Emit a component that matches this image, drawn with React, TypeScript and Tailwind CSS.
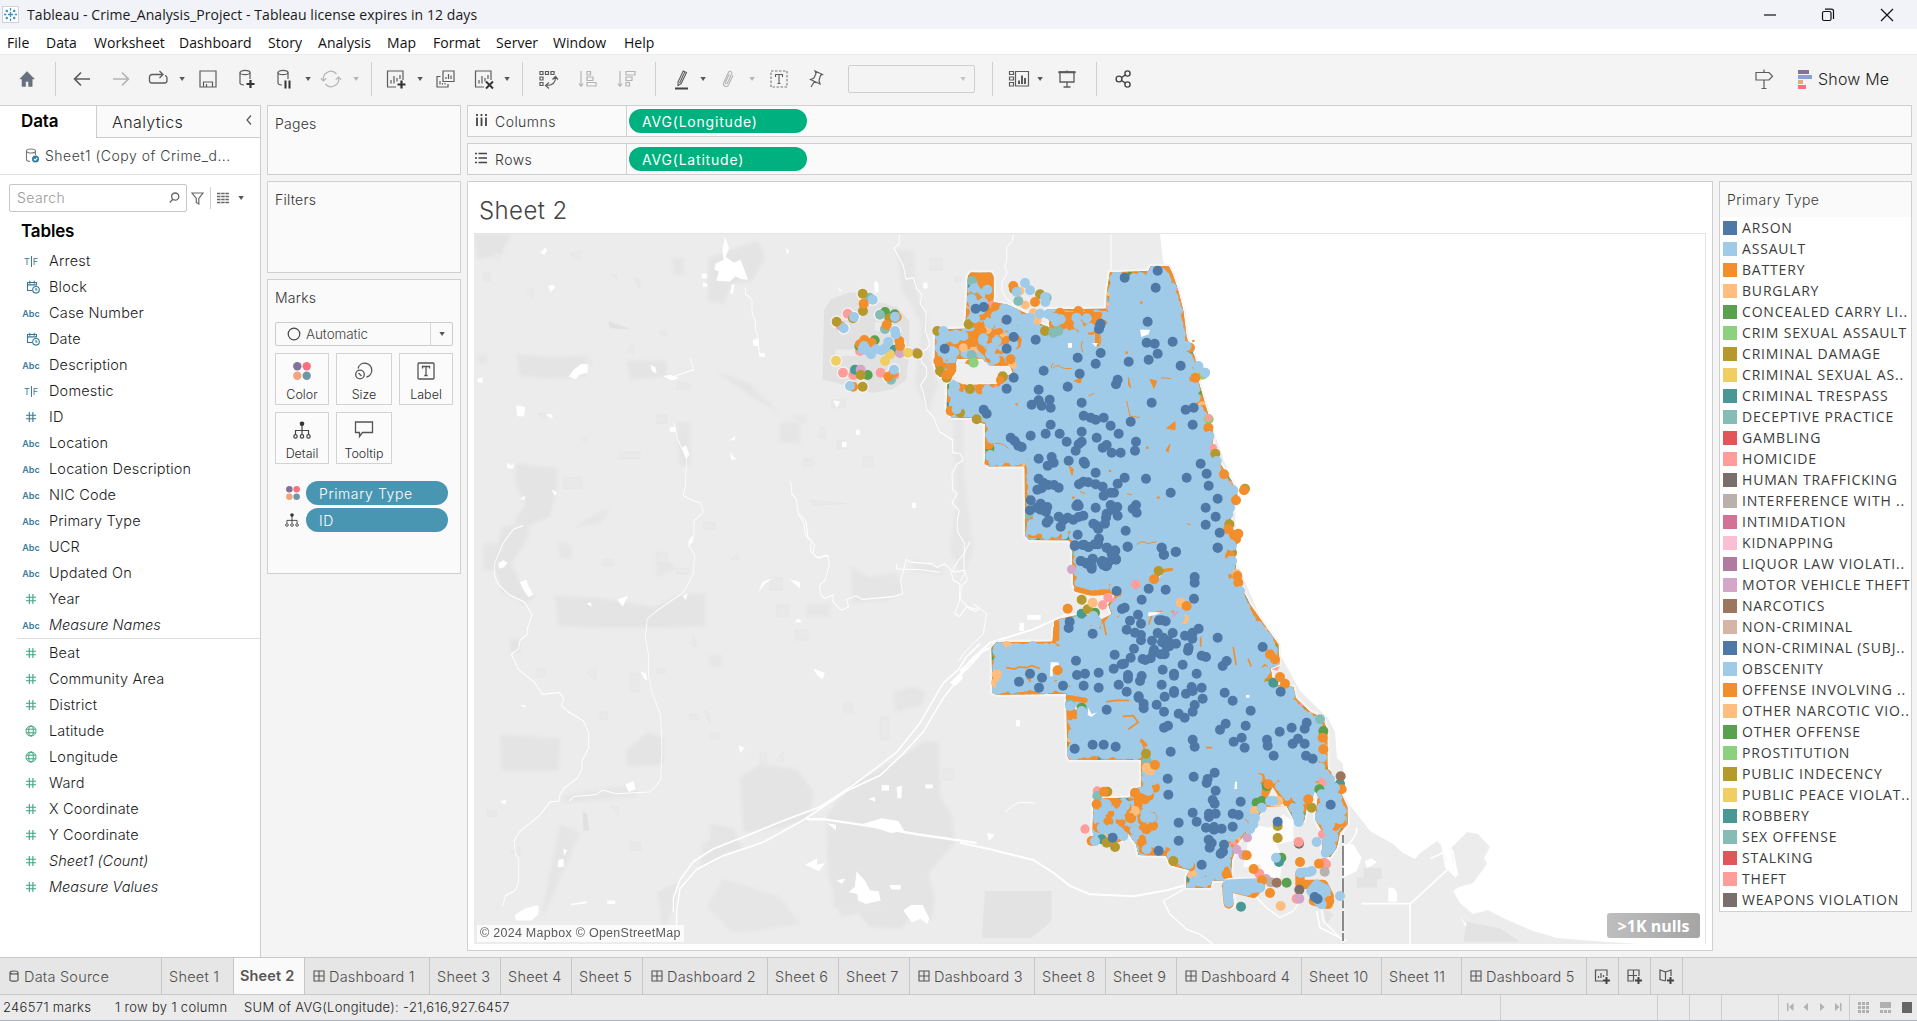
import React from "react";

const UI = "font-['Inter','Open_Sans',sans-serif]";
const SEG = "font-['Open_Sans','Noto_Sans',sans-serif]";

const C = {
  navy: "#4e79a7", sky: "#a0cbe8", orange: "#f28e2b", peach: "#ffbe7d", green: "#59a14f", lime: "#8cd17d",
  olive: "#b6992d", yellow: "#f1ce63", teal: "#499894", mint: "#86bcb6", red: "#e15759", pink: "#ff9d9a",
  gray: "#79706e", silver: "#bab0ac", rose: "#d37295", blush: "#fabfd2", purple: "#b07aa1", lilac: "#d4a6c8",
  brown: "#9d7660", tan: "#d7b5a6",
};

const legend: [string, string][] = [
  ["ARSON", C.navy], ["ASSAULT", C.sky], ["BATTERY", C.orange], ["BURGLARY", C.peach],
  ["CONCEALED CARRY LI..", C.green], ["CRIM SEXUAL ASSAULT", C.lime], ["CRIMINAL DAMAGE", C.olive],
  ["CRIMINAL SEXUAL AS..", C.yellow], ["CRIMINAL TRESPASS", C.teal], ["DECEPTIVE PRACTICE", C.mint],
  ["GAMBLING", C.red], ["HOMICIDE", C.pink], ["HUMAN TRAFFICKING", C.gray], ["INTERFERENCE WITH ..", C.silver],
  ["INTIMIDATION", C.rose], ["KIDNAPPING", C.blush], ["LIQUOR LAW VIOLATI..", C.purple],
  ["MOTOR VEHICLE THEFT", C.lilac], ["NARCOTICS", C.brown], ["NON-CRIMINAL", C.tan],
  ["NON-CRIMINAL (SUBJ..", C.navy], ["OBSCENITY", C.sky], ["OFFENSE INVOLVING ..", C.orange],
  ["OTHER NARCOTIC VIO..", C.peach], ["OTHER OFFENSE", C.green], ["PROSTITUTION", C.lime],
  ["PUBLIC INDECENCY", C.olive], ["PUBLIC PEACE VIOLAT..", C.yellow], ["ROBBERY", C.teal],
  ["SEX OFFENSE", C.mint], ["STALKING", C.red], ["THEFT", C.pink], ["WEAPONS VIOLATION", C.gray],
];

type Kind = "tf" | "date" | "abc" | "num" | "geo";
const dimensions: [Kind, string][] = [
  ["tf", "Arrest"], ["date", "Block"], ["abc", "Case Number"], ["date", "Date"], ["abc", "Description"],
  ["tf", "Domestic"], ["num", "ID"], ["abc", "Location"], ["abc", "Location Description"], ["abc", "NIC Code"],
  ["abc", "Primary Type"], ["abc", "UCR"], ["abc", "Updated On"],
];
const measures: [Kind, string][] = [
  ["num", "Beat"], ["num", "Community Area"], ["num", "District"], ["geo", "Latitude"], ["geo", "Longitude"],
  ["num", "Ward"], ["num", "X Coordinate"], ["num", "Y Coordinate"],
];

function Svg({ size = 22, children, color = "#5c5c5c", sw = 1.2, className = "" }: { size?: number; children: React.ReactNode; color?: string; sw?: number; className?: string }) {
  return (
    <svg width={size} height={size} viewBox={`0 0 ${size} ${size}`} fill="none" stroke={color} strokeWidth={sw} className={`block shrink-0 ${className}`}>
      {children}
    </svg>
  );
}

function Caret({ className = "", color = "#555" }: { className?: string; color?: string }) {
  return (
    <svg width="8" height="6" viewBox="0 0 8 6" className={`block shrink-0 ${className}`}>
      <path d="M1.4 1h5.4L4.1 5z" fill={color} />
    </svg>
  );
}

const Sep = ({ className = "" }: { className?: string }) => <div className={`h-[34px] w-px shrink-0 bg-[#cfcfcf] ${className}`} />;

function FieldIcon({ kind, green }: { kind: Kind; green?: boolean }) {
  const col = green ? "#3ba57c" : "#34789a";
  if (kind === "abc") return <span className="font-['Inter'] text-[9px] font-semibold leading-none text-[#3a7c9c]">Abc</span>;
  if (kind === "tf")
    return (
      <span className="flex items-center gap-[1px] font-['Inter'] text-[9px] leading-none text-[#3a7c9c]">
        T<span className="h-[11px] w-px bg-[#3a7c9c]" />F
      </span>
    );
  if (kind === "num")
    return (
      <Svg size={12} color={col} sw={1.1}>
        <path d="M4.3 1v10M7.9 1v10M1 4.3h10M1 7.8h10" />
      </Svg>
    );
  if (kind === "geo")
    return (
      <Svg size={12} color={col} sw={1}>
        <circle cx="6" cy="6" r="5" />
        <ellipse cx="6" cy="6" rx="2.3" ry="5" />
        <path d="M1.4 4.2h9.2M1.4 7.8h9.2" />
      </Svg>
    );
  return (
    <Svg size={14} color={col} sw={1.1} className="ml-1">
      <path d="M6 10.5H1.5v-8h9v3M1.5 4.9h9M3.8.8v3M8.2.8v3" />
      <circle cx="10" cy="9.8" r="3.3" />
      <path d="M10 8v2h1.5" />
    </Svg>
  );
}

function Field({ kind, name, green, italic }: { kind: Kind; name: string; green?: boolean; italic?: boolean }) {
  return (
    <div className="flex h-[26px] items-center">
      <div className="flex w-[62px] shrink-0 justify-center"><FieldIcon kind={kind} green={green} /></div>
      <div className={`-ml-[13px] whitespace-nowrap text-[14.5px] font-[350] text-[#1c1c1c] ${italic ? "italic tracking-[0.03px]" : "tracking-[0.18px]"}`}>{name}</div>
    </div>
  );
}

function ColorDots({ size }: { size: number }) {
  return (
    <svg width={size} height={size} viewBox="0 0 18 18" className="block">
      <circle cx="4.3" cy="4.3" r="4.2" fill="#84719a" />
      <circle cx="13.7" cy="4.3" r="4.2" fill="#fb6f80" />
      <circle cx="4.3" cy="13.7" r="4.2" fill="#f2a57c" />
      <circle cx="13.7" cy="13.7" r="4.2" fill="#6d97a6" />
    </svg>
  );
}

function DetailIcon({ size }: { size: number }) {
  return (
    <svg width={size} height={size} viewBox="0 0 18 18" fill="none" stroke="#444" strokeWidth="1.2" className="block">
      <circle cx="9" cy="2.7" r="2.3" fill="#333" stroke="none" />
      <path d="M9 4v9M2.5 13V9.5h13V13" />
      <circle cx="2.5" cy="15.4" r="1.7" />
      <circle cx="9" cy="15.4" r="1.7" />
      <circle cx="15.5" cy="15.4" r="1.7" />
    </svg>
  );
}

function MarkButton({ label, children, className = "" }: { label: string; children: React.ReactNode; className?: string }) {
  return (
    <div className={`flex h-[52px] flex-col items-center border border-[#d3d3d3] bg-[#fbfbfb] pt-[7px] ${className}`}>
      <div className="flex h-[20px] items-center">{children}</div>
      <div className="mt-[6px] text-[12.5px] font-[350] leading-4 text-[#2c2c2c]">{label}</div>
    </div>
  );
}

const Grid4 = ({ color = "#555" }: { color?: string }) => (
  <Svg size={12} color={color} sw={1.1}><path d="M1 1h10v10H1zM6 1v10M1 6h10" /></Svg>
);

/* ---------- map ---------- */

type Pt = [number, number];

function Dots({ at, color, r = 15 }: { at: string; color: string; r?: number }) {
  return (
    <g fill={color}>
      {at.trim().split(/\s+/).map((p, i) => {
        const [x, y] = p.split(",").map(Number);
        return <circle key={i} cx={x} cy={y} r={r} />;
      })}
    </g>
  );
}

/* Each map tile has its own local grid, three units to a pixel. */
const NORTH = "translate(800 230) scale(.33333)";
const SOUTH = "translate(960 540) scale(.33333)";
const WEST = "translate(470 230) scale(.33333 .456)";
const SHORE = "translate(1200 730) scale(.33333)";

const CITY =
  "M512,125 L574,125 L580,138 L580,213 L625,222 L680,248 L712,275 L750,290 L742,235 L918,233 L921,180 L930,124 L1045,121 L1052,106 L1106,105 L1118,130 L1135,180 L1150,240 L1160,320 L1185,380 L1198,460 L1226,555 L1240,610 L1238,655 L1265,705 L1295,750 L1312,790 L1300,830 L1290,870 L1300,920 L1305,960 L1304,990 L1315,1050 L1350,1120 L1385,1170 L1435,1240 L1438,1300 L1412,1312 L1420,1360 L1480,1368 L1488,1402 L1530,1442 L1568,1460 L1582,1500 L1582,1600 L1588,1640 L1610,1660 L1625,1690 L1643,1730 L1643,1780 L1620,1805 L1610,1850 L1590,1878 L1568,1865 L1566,1800 L1545,1765 L1552,1710 L1560,1670 L1548,1690 L1520,1730 L1512,1770 L1488,1778 L1460,1725 L1420,1668 L1388,1640 L1394,1690 L1382,1745 L1350,1790 L1312,1838 L1295,1890 L1292,1947 L1235,1950 L1232,1971 L1158,1970 L1160,1935 L1168,1918 L1112,1903 L1098,1874 L1016,1872 L1008,1840 L984,1806 L960,1832 L930,1838 L880,1825 L878,1795 L880,1710 L912,1702 L990,1700 L995,1675 L1024,1668 L1024,1585 L1012,1586 L808,1586 L802,1575 L799,1388 L590,1391 L577,1385 L575,1250 L590,1234 L758,1232 L760,1190 L775,1165 L850,1148 L900,1168 L935,1150 L925,1120 L945,1095 L930,1086 L830,1082 L820,1060 L815,940 L806,928 L688,927 L676,915 L674,706 L566,706 L556,696 L555,578 L525,572 L515,560 L455,560 L440,535 L442,460 L470,450 L500,462 L590,460 L605,438 L640,430 L630,404 L560,402 L548,382 L470,384 L462,432 L418,438 L404,400 L405,312 L420,295 L495,293 L500,225 L504,135 Z";

/* Small deterministic generator, so the fringe is the same on every render. */
function rng(seed: number) {
  let s = seed;
  return () => {
    s = (s * 16807) % 2147483647;
    return s / 2147483647;
  };
}

const cityPts: Pt[] = CITY.replace(/[MLZ]/g, " ").trim().split(/\s+/).map((p) => p.split(",").map(Number) as Pt);

function buildFringe() {
  const rand = rng(4711);
  const under: { x: number; y: number; c: string }[] = [];
  const over: { x: number; y: number }[] = [];
  const others = [C.olive, C.mint, C.olive, C.pink, C.peach, C.green, C.teal];
  cityPts.forEach(([x1, y1], i) => {
    const [x2, y2] = cityPts[(i + 1) % cityPts.length];
    const len = Math.hypot(x2 - x1, y2 - y1);
    const ux = (x2 - x1) / len, uy = (y2 - y1) / len;
    for (let d = 0; d < len; d += 11) {
      const k = 8 + rand() * 5;
      under.push({ x: x1 + ux * d - uy * k, y: y1 + uy * d + ux * k, c: rand() < 0.74 ? C.orange : others[Math.floor(rand() * others.length)] });
      if (rand() < 0.72) {
        const m = 14 + rand() * 11;
        const e = d + rand() * 8;
        over.push({ x: x1 + ux * e - uy * m, y: y1 + uy * e + ux * m });
      }
    }
  });
  return { under, over };
}
const fringe = buildFringe();

function scatter(seed: number, n: number, x0: number, y0: number, x1: number, y1: number) {
  const rand = rng(seed);
  return Array.from({ length: n }, () => `${Math.round(x0 + rand() * (x1 - x0))},${Math.round(y0 + rand() * (y1 - y0))}`).join(" ");
}

const ARSON_N =
  "1073,119 974,140 1067,170 527,233 551,228 620,266 434,353 641,318 707,326 620,353 902,278 900,284 897,294 1043,272 1040,335 1064,338 1118,332 1073,368 1046,386 986,392 902,366 887,398 833,380 731,419 839,428 641,440 1142,404 953,446 948,460 620,473 803,467 716,476 845,515 1055,515 695,521 716,508 725,524 749,506 752,530 551,536 560,548 851,554 872,560 887,566 911,560 992,572 932,584 1181,530 1157,536 1178,581 752,581 737,608 779,608 692,614 845,602 890,620 956,608 800,632 632,620 644,630 655,644 665,648 845,632 836,640 827,659 908,650 920,642 1008,632 1005,659 935,665 962,665 716,683 755,678 761,695 743,704 806,689 851,692 855,698 887,725 974,740 1038,743 1160,740 1202,698 1220,728 1226,764 716,743 730,755 712,776 725,772 745,762 762,762 776,770 837,760 850,752 865,754 887,760 908,767 953,758 942,785 911,794 932,785 1112,785 1253,803 1217,830 1247,857 1217,881 1259,905 1253,950 692,808 690,838 710,830 722,818 722,836 742,828 738,842 833,820 829,825 836,825 887,830 932,822 935,836 952,828 1008,822 998,833 1010,845 953,854 776,857 803,860 790,868 820,866 836,858 850,854 746,868 740,875 782,887 880,878 890,884 915,878 918,860 920,848 895,894 977,899 833,911 897,923 825,943 852,941 865,948 884,940 895,940 920,950 983,947 1085,950 1091,971 1127,963 945,958 935,968 948,986 878,983 843,990 860,996 875,1006 905,994 925,994 918,1006";
const ARSON_S =
  "344,15 368,12 386,18 413,10 441,20 466,30 503,17 468,54 440,65 427,60 430,72 441,74 398,54 362,60 380,68 395,83 605,20 612,41 648,32 773,20 704,108 704,125 566,143 617,146 470,150 545,176 702,173 486,204 494,200 534,221 510,239 543,248 329,242 326,261 597,238 606,238 617,241 398,278 500,266 525,275 543,282 543,298 593,276 638,276 610,290 625,300 576,299 606,304 648,308 675,284 698,275 716,263 697,293 620,318 628,316 582,326 580,335 602,340 614,340 773,290 908,318 522,323 686,320 684,329 464,341 512,350 548,354 556,357 572,352 725,344 738,348 492,368 485,370 461,383 800,360 788,375 668,371 608,386 348,359 710,398 642,398 642,404 351,402 375,398 416,395 210,398 177,422 246,410 237,440 309,434 371,434 416,440 504,402 504,413 545,405 540,420 476,431 605,431 500,452 695,438 725,440 678,458 698,450 642,450 642,456 614,467 728,473 794,455 818,479 536,466 536,470 551,488 551,502 590,491 704,492 698,512 612,512 656,518 674,530 440,506 872,509 962,452 797,548 780,566 857,554 624,554 612,560 1040,545 995,560 1034,563 959,572 845,590 821,602 854,620 698,596 704,617 632,632 921,596 923,614 1014,593 1034,608 998,608 941,644 1038,644 1058,653 431,611 398,611 467,617 344,623 764,695 701,707 743,714 740,726 623,713 625,761 767,749 842,782 758,777 764,788 698,815 767,818 747,818 747,828 818,818 836,822 656,845 710,842 818,857 738,860 762,858 762,866 785,863 656,899 746,896 755,906 749,920 792,911 789,932 782,938 458,890 596,929 725,971 1112,791 953,842 1064,1068 1073,1074";

const SPECKS = [
  "760,410 q15,-12 25,0 q12,5 30,2", "985,440 l7,30 l-6,-8z", "1050,445 l20,5 l-8,22z", "980,510 l10,45 l30,5", "1100,592 l25,-20 l0,24z",
  "585,638 q20,-5 40,14", "808,705 l8,28 l4,-18z", "845,440 l-22,10 l18,6z", "1110,640 l-6,24 l-6,-6z", "865,495 l18,-8", "840,782 l16,6", "1160,878 l12,3",
  "1010,940 q18,-14 32,-2 l28,-6", "980,788 l16,4", "1083,440 l30,3", "847,330 q-8,20 2,34", "900,310 q5,20 0,30", "760,396 q-10,10 -5,16",
];

function ScatterMap() {
  return (
    <svg width="1231" height="710" viewBox="474 233 1231 710" className="block">
      <defs>
        <clipPath id="city"><path d={CITY} /></clipPath>
        <filter id="soft" x="-5%" y="-5%" width="110%" height="110%"><feGaussianBlur stdDeviation="4" /></filter>
      </defs>
      <rect x="474" y="233" width="1231" height="710" fill="#ececec" />
      {/* parks, preserves and built-up patches */}
      <g transform={WEST} fill="#e3e3e3" filter="url(#soft)">
        <path d="M12,8h110l-30,45l-70,8zM140,270l120,8l90,-5v45l-110,5l-90,-5zM470,285h120v35l-110,5zM715,60l150,-40l20,40l-40,50l-60,5l-25,45l-45,-5z" opacity=".9" />
        <path d="M620,420h40v95h-30zM605,60h36v35h-30zM1280,40l50,5l10,90l35,60l-5,60l35,80l-30,60l-40,-60l20,-130l-60,-80zM740,310l90,20l100,70l-90,-40zM960,405h45v20zM930,420h60v45h-60z" opacity=".8" />
        <path d="M140,510l120,10v45l-20,60l-60,20l-50,-5l35,-40l-30,-50zM95,650l80,-10v30l-50,60l30,50l40,20l-30,20l-70,-30l-25,-60zM255,800l130,5l170,20l80,-30h70v70l-120,5h-220l-100,-5zM90,1105l180,8l-5,70h-170zM470,1140l60,-40l50,10v60l-110,5zM120,895h30v30h-28z" opacity=".9" />
        <path d="M810,1200l60,-30l110,10l50,50l-10,60l-100,20l-100,10zM720,1300l70,10l30,50l-100,10zM1070,1280l80,-70l130,-50l80,-40h45l5,120l35,40l10,60l-80,70l20,50l-10,50l-60,-10l-30,30l-100,-5l-30,-30l-50,10l-40,-90z" opacity=".9" />
        <path d="M1090,1410h160v75h-160zM1270,1010l60,-10l35,10l-10,30l-80,15zM1140,735l60,25l80,-10l20,40l-50,20l-100,5zM40,685h50v60h-50zM700,1340l60,-10v40l-70,30zM560,1450l60,-20l-10,60l-30,40zM270,1300l60,20l-90,150l-30,40z" opacity=".8" />
        <path d="M270,1240l150,-20l80,-5v25l-210,15zM265,680l40,10v30l-40,-5zM310,650l80,-35l30,-5l-30,30zM1330,720l90,20v15l-90,-8zM1010,820l70,-5v30h-70zM760,1420l170,40l60,60l-200,20l-80,-60zM1440,300h40v220l30,180l-30,60l-40,-60l20,-120zM560,700l60,40l-60,20zM20,270l30,0v20h-30zM715,930l40,0v25h-40z" opacity=".6" />
      </g>
      <g transform={WEST} fill="#e1e1e1">
        <path d="M1058,325l4,-150l20,-25l55,-15l25,0l60,20l60,12l36,30v70l-10,60l-40,20l-60,8z" />
        <path d="M1096,260h70v14h-70zM1215,200h40v20h-40z" fill="#ebebeb" />
        <path d="M415,198l70,18l-65,-3zM338,1275l12,0l8,40h-18z" />
      </g>
      {/* small faint lots */}
      <g transform={WEST} fill="#e9e9e9" stroke="#e4e4e4" strokeWidth="1.5">
        <path d="M70,45l25,5l-10,20zM300,50l30,-5v20zM490,100l22,6l-5,20zM170,135l18,-10v25zM420,95h20v12zM570,220h18v10h-18zM470,260l20,-12v22zM350,280l15,4v14zM560,405l30,-3v20h-30zM200,400h25v12zM330,455l20,-5v16zM450,485h60v14h-60zM280,540h55v25h-55zM700,640h35v14h-35zM400,720h28v14h-28zM560,705h30v22h-30zM620,740h36v12h-36zM780,720l25,-12v14zM920,820h36v26h-36zM975,875h38v22h-38zM660,905l12,-20l8,26zM1000,500h28v16h-28zM1100,460h30v18h-30zM1180,495h28v22h-28zM1020,590l110,8l-100,3zM900,760h36v28h-36zM480,970h26v40h-26zM350,970l28,-14v30zM200,960h24v16h-24zM390,1055h22v16h-22zM560,960h24v10h-24zM700,1050l20,10v20zM870,1145h20v25h-20zM720,1100h28v14h-28zM920,1160l20,-20v24zM1230,1065h26v50h-26zM1120,1035h28v20h-28zM660,1060h26v12h-26zM50,1270h30v14h-30zM120,1360l30,-10v20zM480,1340h32v18h-32zM420,1260l26,4v20zM1380,60h36v26h-36zM1420,1180h30v24h-30zM1455,100h18v12h-18zM1050,430h16v24h-16zM620,330l40,6v12h-40zM40,90h20v20h-20zM1085,370h40v18h-40z" />
      </g>
      {/* ponds */}
      <g transform={WEST} fill="#fff">
        <path d="M765,12l12,25l-10,20l25,12l20,-6l10,20l12,24l-22,-2l-15,-6l-18,12l-40,-2l8,-20l-14,-4l4,-14l24,-8l-4,-20zM225,36l6,6l-8,10l-12,-4zM945,38l12,4l-4,10zM235,120l14,-2l8,6l-16,10zM310,305l25,-14l18,2v18l-24,4l-12,10l-20,-6zM542,294l14,4l4,14l-14,-4zM578,318l24,-2l26,6l-22,6zM138,382l28,4l-4,20h-20zM225,402h22v10zM600,430h16v10h-16zM110,508l16,6l8,-8l-6,16l-16,-2zM648,470l10,20l-10,10l-12,-24zM777,460l18,-10v8zM780,486l18,14l-14,2zM150,588l14,-8v10zM244,566l18,8l-8,6zM655,680l14,-12v14l-12,8zM1326,596h12v10h-12zM1158,436h12v10h-12zM1116,462h14v12h-14z" />
        <path d="M150,770l20,-5l4,12l16,20l-14,6l-16,-16zM442,808l32,-8l-16,24zM865,792l12,-22l34,-10l-28,14zM960,764l30,6v14l-16,-10zM350,818l12,-4l4,10zM985,850l12,8h-24zM1030,960l34,8l-6,16l-16,-10zM512,966l16,4l4,16l-10,-4zM150,1040h16v6zM806,1128l18,6l-14,10zM466,1214l24,-8l8,18l-22,6zM90,1250l20,-2l-6,10zM1180,1300l55,-12l50,6l18,22l-40,4zM1235,1215h22v12h-22zM1280,1220l16,-4l-2,28h-12zM1195,1245l20,-4v10zM1366,1214h22v8h-22zM1070,1298l28,4v12zM1005,1390l36,-14v14l24,-4l-18,18zM1100,1424l26,-4l-10,12zM1160,1404l26,22l14,20l26,2l6,20l-44,8l-24,-8l-2,-14l-26,-4l18,-12zM1258,1434h34v10h-28zM1300,1490l24,-12h34l20,30l-6,12l-20,-12l-26,8zM265,1380l16,-4v18l-18,2zM280,1354l12,4l-10,12zM300,1476l50,-6v4l-42,4zM412,1468h24v8h-24zM135,1500l30,-14l40,-8v20l-20,14h-48z" />
        <path d="M848,240l14,-6l8,34h14v8h-16l-4,-24h-14zM1440,990l30,-20l10,10l-24,18zM20,325l18,-4v12h-12zM1212,112l10,-2l2,20l-10,2zM1102,122l14,10h-8zM1362,116h10v10h-10zM85,728l16,-6l12,6l-12,10l-14,2zM638,800l14,-6l-4,16zM695,94h16v10h-16zM700,112l12,4v6h-14zM785,118l8,0l-4,20l-8,-2z" />
      </g>
      {/* rivers and highways */}
      <g transform={WEST} fill="none" stroke="#fff" strokeWidth="2.6" strokeLinejoin="round">
        <path d="M1288,8v20l-16,10l28,38l8,30l22,-4l10,24l16,14l-6,18l18,20v24l-2,16l14,30l-8,10l-18,8v22l16,12v18l-18,20l10,20l8,34l20,16l18,32l40,18v28l22,2l10,14l-20,10l-14,20l2,36l14,8l-16,20l22,18l-6,18v26l22,28l-2,22l-18,16l-20,26l6,16l20,8l-2,38l-14,26l14,8l22,-22l30,5" />
        <path d="M962,548l4,30l12,8l8,36l16,18l4,26l18,14l-2,22l18,14l34,-4l4,20l-12,32l-18,14l4,20l12,8l26,-8l-2,14l26,20l22,-8l-6,-16l28,-8l20,8l90,-6l30,-6l-6,-30l12,-30l4,-16l12,6l68,4l12,8l24,-8l26,18l34,-4l8,22l-18,12l-2,30l26,20l20,6l8,-6" />
        <path d="M160,646l-30,8l-30,30l-26,44v28l12,20l32,22l46,16l22,28l-14,30v12l-22,14l-4,18l-22,12l22,34l48,28l22,26l52,-4l14,14l-8,14l20,14l46,20l16,26v34l-20,28v18l-14,20l-40,22l-14,18v10l-28,2l-32,30l-60,36l-16,20l4,26l10,14v50l-10,18l-30,12l-8,24" />
        <path d="M612,420l10,36l28,42l-4,60l-6,22l30,12l22,4l8,20l-28,20v34l-16,20l18,20l-4,40l-14,22l-18,22l-80,40l-26,16l-6,40l10,42v44l12,40l24,46l4,80l-4,60l-14,16l-20,12l-100,4l-40,-8l-20,10l-66,4l-14,10" strokeWidth="2.2" />
        <path d="M826,124v14l20,12v28l10,20v18l10,18v24M602,322l36,-10l34,-8l-12,-26" strokeWidth="2.4" />
      </g>
      <g transform={WEST} fill="none" stroke="#fff" strokeWidth="4" strokeLinejoin="round">
        <path d="M1530,905l-40,28l-24,28l-46,30l-70,88l-70,64l-60,34l-70,38l-100,48l-110,30l-120,36l-90,26l-60,28l-40,40l-20,40v30" />
        <path d="M1530,930l-50,38l-60,56l-60,74l-60,48l-70,48l-100,34l-130,64l-120,48l-120,30l-80,30l-50,42l-10,50v40" />
        <path d="M1010,1290h50l130,14l160,20l170,18" strokeWidth="5" />
      </g>
      <g transform={NORTH} fill="none" stroke="#fff" strokeWidth="4">
        <path d="M933,12v112M640,12l-4,20l-16,16v40l-6,20l8,16l-16,30v24l14,26l40,30l60,50" strokeWidth="3" />
        <path d="M0,850l18,20l6,50l20,20l-6,28l20,14l18,-10l12,8M290,1000v14l70,2l60,8" strokeWidth="3" />
        <path d="M228,150l8,10v22l-12,4zM370,155h12v16h-12zM168,597h12v14h-12zM336,816h12v14h-12zM100,508l20,4l-10,18z" fill="#fff" stroke="none" />
      </g>
      <g transform={SOUTH} fill="none" stroke="#fff" strokeWidth="6" strokeLinejoin="round">
        <path d="M0,400l30,-40l60,-55l130,-40l100,-45M0,390l70,-60l40,-20M0,905l90,20l130,32l60,38l50,40l60,25l130,6l100,-18l60,-16" />
        <path d="M670,1045l-60,35l20,40l50,45l40,15l40,30M880,1060l40,40l40,30l40,-20l20,-30M1080,1080l10,60l60,60" strokeWidth="4" />
        <path d="M30,0l-18,40l0,60l-10,20M40,188l40,30l-10,60l-60,60l-12,20M135,812l40,-28l50,2" strokeWidth="3" />
        <path d="M202,222h40v14h-40zM178,246h14v24h-14zM168,538h12v18h-12zM80,875l24,6l-16,18z" fill="#fff" stroke="none" />
      </g>
      <g transform={SOUTH} fill="#e3e3e3">
        <path d="M75,1050h200v90l-60,50h-150zM1090,1100l30,20l-20,30zM1190,1010h60v30h-60z" />
      </g>
      {/* lake */}
      <path
        fill="#fff"
        d="M1160,233 L1163,260 L1180,300 L1190,350 L1210,420 L1235,490 L1236,560 L1262,620 L1300,690 L1328,717 L1335,731 L1337,757 L1343,763 L1344,797 L1357,813 L1370,830 L1393,843 L1403,852 L1415,858 L1420,852 L1437,840 L1442,845 L1446,858 L1447,868 L1456,877 L1458,870 L1453,860 L1451,847 L1467,831 L1478,833 L1490,846 L1484,857 L1487,863 L1473,882 L1459,886 L1453,890 L1460,902 L1473,913 L1488,909 L1503,917 L1533,930 L1557,937 L1593,940 L1640,943 L1705,943 L1705,233 Z"
      />
      <g transform={SHORE} fill="none" stroke="#fff" strokeWidth="5">
        <path d="M485,518h145v120M632,518l112,-104l-6,-20M690,383l40,-18M470,290q4,20 -25,50M350,540l10,50l80,40M738,410l34,20l-14,-70l-34,-30z" />
        <path d="M430,340l30,0l25,40l-15,40l-40,20zM495,390l20,-8l15,12l-15,10l-15,8zM565,470h16l10,14v28h-26zM780,558l36,40l20,12l-30,-8z" fill="#fff" stroke="none" />
        <path d="M150,280l60,10l40,-40l30,20v60l-50,10l20,40l-10,60l-40,20l-20,-60l-50,10l10,-60z" fill="#fff" stroke="none" opacity=".85" />
        <path d="M490,410h55v35h-55zM800,572l100,20l60,40h-170z" fill="#e3e3e3" stroke="none" />
        <path d="M429,200v440" stroke="#f6f6f6" strokeWidth="7" />
        <path d="M429,312v328" stroke="#555" strokeWidth="4" strokeDasharray="24 8 60 6" />
      </g>

      {/* marks: city body */}
      <g transform={NORTH} strokeLinejoin="round" strokeLinecap="round">
        <path d={CITY} fill="#f1f1f1" stroke="#f5f5f5" strokeWidth="14" />
        <path d={CITY} fill={C.sky} />
        <g clipPath="url(#city)">
          {fringe.under.map((p, i) => <circle key={i} cx={p.x} cy={p.y} r={15} fill={p.c} />)}
          <Dots color={C.orange} at={scatter(77, 56, 500, 225, 650, 395)} />
          <Dots color={C.orange} at={scatter(31, 22, 410, 300, 500, 430)} />
          <Dots color={C.orange} at={scatter(93, 34, 740, 245, 915, 300)} />
          <Dots color={C.orange} at={scatter(15, 24, 885, 1710, 1050, 1830)} />
          <Dots color={C.orange} at={scatter(64, 16, 585, 1345, 780, 1380)} />
          <Dots color={C.orange} at={scatter(88, 8, 1025, 1600, 1070, 1860)} />
          {fringe.over.map((p, i) => <circle key={i} cx={p.x} cy={p.y} r={14.5} fill={C.sky} />)}
          <Dots color={C.sky} at={scatter(52, 24, 500, 225, 650, 395)} />
          <Dots color={C.sky} at={scatter(29, 14, 885, 1710, 1050, 1830)} />
          <Dots color={C.sky} at={scatter(12, 12, 600, 1340, 790, 1370)} />
        </g>
      </g>

      {/* north side clusters */}
      <g transform={NORTH}>
        <g fill="none" stroke={C.orange} strokeLinejoin="round" strokeLinecap="round">
          <path d="M518,138h50v60M545,140v20M520,190l20,20" strokeWidth="26" />
          <path d="M505,275l60,20l20,-20M490,310h70l40,-10l10,30M540,350l20,20l30,25M415,400l50,10l-20,30" strokeWidth="18" />
          <path d="M560,695h50M690,915h90M760,250h140M892,270v70" strokeWidth="14" />
        </g>
        <Dots color={C.peach} at="660,180 676,222 700,245 712,268 740,300 520,360 490,350 562,296 610,320 640,400" r={13} />
        <Dots color={C.olive} at="642,174 506,280 412,300 420,420 440,440 510,474 608,438 480,545 530,565 735,300 720,190" />
        <Dots color={C.mint} at="516,150 516,200 655,210 760,305 775,300 515,372 740,200" />
        <Dots color={C.orange} at="705,213 640,165 415,390 440,432 600,445 452,540 455,410 545,300 575,330 620,330 510,400 835,240 870,250 890,262 800,262 780,245 570,380 600,390 632,385 595,330 540,475" />
        <Dots color={C.sky} at="524,172 562,176 515,205 530,222 550,215 675,156 650,183 690,178 735,198 736,213 720,248 745,250 765,260 782,265 612,233 640,245 660,270 690,260 590,270 570,278 600,250 525,262 430,300 440,320 425,325 465,325 490,315 420,350 440,370 455,360 550,322 590,330 575,350 570,370 585,385 640,340 650,300 680,300 700,350 462,462 465,490 480,500 490,520 470,535 510,520 560,480 600,480 530,535 560,560 830,260 860,262 835,282 870,290 700,900 740,912 765,905 695,880 580,690 600,690 590,680 800,340 850,300 945,148 1215,425 1195,405 1290,830 1285,800 1296,942 660,390 660,440 680,420 640,470 870,330 820,310 860,360 930,260 925,300" />
        <path d="M470,392l30,6l20,10l14,-12l24,-4l10,14l60,0l2,20l-30,12l-12,20l-40,-2l-60,4l-22,-10z" fill="#efefef" />
        <Dots color={C.lime} at="521,395" />
        <Dots color={C.olive} at="608,436" />
        <Dots color={C.orange} at="600,447" r={12} />
        <path d="M1020,296h30l-4,14l-22,8zM876,336h18l-6,12zM804,336h12v14h-12z" fill="#fff" />
        {/* O'Hare */}
        <Dots color="#f3f3f3" r={19} at="188,188 110,272 108,389 353,367 129,425 150,465 188,467 218,206 143,248 162,258 131,292 240,251 285,257 285,300 300,340 200,350 182,430 282,416 265,437 324,365" />
        <Dots color={C.pink} at="143,248 122,284 129,425 160,432 242,425 283,432 180,360" />
        <Dots color={C.green} at="255,243 178,345 224,328 203,432 284,250" />
        <Dots color={C.teal} at="165,416 283,356" />
        <Dots color={C.mint} at="240,251 255,294 208,200 273,446 285,262" />
        <Dots color={C.lilac} at="182,416 300,366 350,365" />
        <Dots color={C.yellow} at="108,389 255,390 324,365 270,370" />
        <Dots color={C.olive} at="188,188 189,240 110,272 159,262 182,432 353,368 188,467 268,262" />
        <Dots color={C.orange} at="191,218 260,282 290,258 193,327 215,335 298,330 300,345 159,467 265,437 280,425 180,340" />
        <Dots color={C.sky} at="218,206 162,258 131,292 285,257 285,300 287,310 265,333 192,345 200,358 213,370 228,355 245,358 255,352 188,355 282,416 150,465" />
        {/* lakefront */}
        <Dots color={C.yellow} at="1205,432" />
        <Dots color={C.lime} at="1210,430 1226,565" />
        <Dots color={C.pink} at="1226,560 1240,650" r={11} />
        <Dots color={C.olive} at="1335,773 1246,668 1296,965 1288,880" />
        <Dots color={C.orange} at="1332,778 1308,808 1302,912 1315,908 1308,925 1225,590 1170,350 1186,440 1272,730 1285,895 1290,975" />
        <Dots color={C.sky} at="1215,425 1195,408 1228,615 1283,770 1300,778 1250,690 1283,830 1285,850 1292,940 1296,990 1160,345" />
        <g fill={C.orange} stroke={C.orange} strokeWidth="3">
          {SPECKS.map((d, i) => <path key={i} d={`M${d}`} fill={d.includes("z") ? C.orange : "none"} />)}
        </g>
        <Dots color={C.orange} at="1024,215 650,520 980,365 1042,650 930,720 1075,800 820,800 1180,330" r={4} />
      </g>

      {/* south side clusters */}
      <g transform={SOUTH}>
        <g fill="none" stroke={C.orange} strokeLinejoin="round" strokeLinecap="round">
          <path d="M350,145l45,12l40,-4M290,245v48M330,500v30M530,750v60M420,800l50,-20l30,40l20,10M545,890v40l20,5M800,985l10,25M325,470l50,8" strokeWidth="16" />
          <path d="M140,380l24,4l12,-6l24,2l14,-6l24,8M440,482l30,-4h36M490,526l30,-2l14,20l-28,20M545,595l8,30M430,240l8,40M575,225q-8,20 -8,24M640,212q-20,-4 -50,2M820,320l8,50M722,290v25M865,355l8,20M740,620h14" strokeWidth="5" />
          <path d="M545,600l12,12M680,190v10M918,722l10,14M1045,780l10,20M590,105l20,-16l24,-4" strokeWidth="10" />
        </g>
        <path d="M908,706l32,30l50,58l-70,4l-16,-30z" fill={C.orange} />
        <path d="M938,738l36,58h-40l-14,-22z" fill="#efefef" />
        <path d="M1078,722l-6,30l-12,38l-6,-6l10,-30z" fill="#f3f3f3" />
        <path d="M272,364h24l0,12l-18,10v20h-8zM565,214h40l-20,8l-20,4zM600,88l8,10l-10,12zM858,462h10v8h-10zM825,722h6v22h-8zM345,500l12,-6v30l-10,10zM385,500l10,20l16,-6l-16,14l-12,-6z" fill="#fff" />
        <path d="M372,162l68,6l-10,20l-30,18l50,14l-25,12l-8,-14l-30,-10l-12,-20z" fill="#f1f1f1" />
        <Dots color={C.pink} at="444,170 428,192 412,750 375,864 1090,720 527,130 1088,880" r={14} />
        <Dots color={C.green} at="405,215 365,500 920,735 890,785 905,780 1090,570 1078,745" />
        <Dots color={C.mint} at="412,765 560,660 330,490 1080,535" />
        <Dots color={C.teal} at="365,218 940,425 425,895 1140,728" />
        <Dots color={C.olive} at="365,176 383,205 596,90 558,638 442,752 465,918 440,905 1055,800 640,960" />
        <Dots color={C.peach} at="398,185 140,315 110,400 108,425 560,680 570,690 525,810 672,235 662,185 885,810 955,780 830,100" />
        <Dots color={C.lilac} at="335,85 650,225 862,890 830,925" r={14} />
        <Dots color={C.brown} at="1142,706" />
        <Dots color={C.orange} at="323,203 293,388 432,752 410,790 415,860 395,900 525,755 540,770 585,672 680,195 582,115 835,125 832,105 545,905 800,1000 930,340 945,355 960,408 975,428 925,730 1045,775 1125,855 1145,845 1145,745 1100,700 1090,625 1088,590 345,520 510,830 500,800 475,790 555,775" />
        <path d="M935,385l25,-10l-8,14z" fill={C.pink} />
        <Dots color={C.sky} at="122,323 218,315 150,330 190,335 290,345 122,433 150,425 170,345 210,350 250,340 140,350 330,495 365,510 365,525 400,225 385,240 410,240 495,795 485,810 440,790 430,810 415,825 425,860 450,865 490,885 405,900 560,715 580,718 565,750 575,800 555,830 575,830 600,790 480,640 440,640 510,640 620,215 660,230 650,240 560,925 580,905 930,780 940,780 905,800 885,830 880,850 870,865 1016,843 1095,700 1110,715 1125,740 1105,770 1130,790 1145,810 1140,835 1110,850 1080,825 1085,800 1105,870 1100,900 1070,903 1097,935 1120,890 1085,760 815,15 812,60 840,150 930,310 900,400" />
        <path d="M1095,760l40,5l18,40l-10,40l-60,5l-14,-35z" fill={C.sky} />

        {/* far south-east */}
        <g fill="none" strokeLinejoin="round" strokeLinecap="round">
          <path d="M808,1032l88,-6M804,1035l5,50" stroke="#f4f4f4" strokeWidth="42" />
          <path d="M800,1036l80,20l20,-24M802,1050l4,38" stroke={C.orange} strokeWidth="30" />
          <path d="M802,1030l88,-4M803,1036l60,14M802,1040l4,44M850,1045l48,-6" stroke={C.sky} strokeWidth="29" />
          <path d="M1020,1000v30M1030,1030l60,0l18,36M1060,1080l45,10" stroke={C.orange} strokeWidth="28" />
          <path d="M1020,995l30,-2M1070,1030l28,15v20l-20,20l-25,-35z" stroke={C.sky} strokeWidth="28" fill={C.sky} />
        </g>
        <Dots color={C.gray} at="1017,908 1018,1046" />
        <Dots color={C.pink} at="1016,903 898,998 1092,965 1098,970 1010,1073" />
        <Dots color={C.lilac} at="850,942 918,1014 1018,1073" />
        <Dots color={C.silver} at="932,1024 1094,992" />
        <Dots color={C.brown} at="950,1025" />
        <Dots color={C.green} at="980,1025 964,950" />
        <Dots color={C.teal} at="957,963 843,1097" />
        <Dots color={C.olive} at="953,855 953,891" />
        <Dots color={C.peach} at="962,1095" />
        <Dots color={C.orange} at="860,943 881,984 906,1018 930,1056 1020,963 1077,968 1108,1080" />
        <Dots color={C.sky} at="948,950 1022,996 1055,990 1140,1065 1085,1090 900,1040" />
        <Dots color={C.navy} at={ARSON_S} />
      </g>
      <g transform={NORTH}><Dots color={C.navy} at={ARSON_N} /></g>
    </svg>
  );
}

/* ---------- shell ---------- */

const Pill = ({ children, className }: { children: React.ReactNode; className: string }) => (
  <div className={`flex h-6 items-center rounded-full pl-[13px] text-[14px] text-white ${className}`}>{children}</div>
);

function Toolbar() {
  const dim = "#b4b4b4";
  return (
    <div className="flex h-[51px] shrink-0 items-center border-t border-[#ebebeb] bg-[#f4f4f4] pb-[2px] pl-4">
      <Svg sw={0}><path d="M11 3.5 3.8 11H6v7.5h3.6v-5h3v5h3.6V11h2.2z" fill="#66707e" stroke="#66707e" strokeWidth=".5" /></Svg>
      <Sep className="ml-[17px]" />
      <Svg className="ml-[15px]" sw={1.7}><path d="M19 11H4M10 4.5 3.6 11l6.4 6.5" /></Svg>
      <Svg className="ml-[17px]" sw={1.7} color={dim}><path d="M3 11h15M12 4.5l6.4 6.5-6.4 6.5" /></Svg>
      <Svg className="ml-[15px]" sw={1.3}><path d="M15 6.5H5a2.500 2.500 0 0 0-2.500 2.500v3.500A2.500 2.500 0 0 0 5 15h12.500a2.500 2.500 0 0 0 2.500-2.500V10a2.500 2.500 0 0 0-2-2.400" /><path d="M12.500 3 16 6.500l-3.500 3.500" /></Svg>
      <Caret className="ml-[9px]" />
      <Svg className="ml-[11px]" sw={1.2}><path d="M3 3h16v16H3zM6.500 19v-5h9v5M9.500 19v-3" /></Svg>
      <Svg className="ml-[17px]" sw={1.2}><ellipse cx="9" cy="4.500" rx="5" ry="2.200" /><path d="M4 4.500v10.500c0 1 1.500 1.800 4 2M14 4.500V11" /><path d="M14.500 12v8M10.500 16h8" stroke="#333" strokeWidth="2.200" /></Svg>
      <Svg className="ml-[15px]" sw={1.2}><ellipse cx="10" cy="4.500" rx="5" ry="2.200" /><path d="M5 4.500v10.500c0 1 1.500 1.800 4 2M15 4.500V11" /><path d="M12.500 12.500v8M16.500 12.500v8" stroke="#333" strokeWidth="2" /></Svg>
      <Caret className="ml-[9px]" />
      <Svg className="ml-[8px]" sw={1.2} color={dim}><path d="M3.500 12.500a7.500 7.500 0 0 1 13-6.500M18.500 9.500a7.500 7.500 0 0 1-13 6.500" /><path d="M.8 10.300l2.600 2.700 2.800-2.700M15.800 11.700l2.700-2.700 2.700 2.700" /></Svg>
      <Caret className="ml-[10px]" color={dim} />
      <Sep className="ml-[11px]" />
      <Svg className="ml-[13px]" sw={1.200}><path d="M11 19H2.500V3h15.500v9M6 15.500V12M9 15.500V8M12 13.500V10M15 11V7" /><path d="M16.500 12.500v8M12.500 16.500h8" stroke="#333" strokeWidth="2.200" /></Svg>
      <Caret className="ml-[9px]" />
      <Svg className="ml-[10px]" sw={1.200}><path d="M9 3h11v10.500H9zM6.500 8.500H3V19h11v-3M12 11V9M14.500 11V6M17 11V7.500M6 16.500V13M8.500 16.500V15M11 16.500V15" /></Svg>
      <Svg className="ml-[17px]" sw={1.200}><path d="M11 19H2.500V3H18v9M6 15.500V12M9 15.500V8M12 13.500V10M15 11V7" /><path d="M13 13.500l7 7M20 13.500l-7 7" stroke="#333" strokeWidth="1.900" /></Svg>
      <Caret className="ml-[8px]" />
      <Sep className="ml-[11px]" />
      <Svg className="ml-[14px]" sw={1.200}><path d="M3 3.500h3v3H3zM8.500 3.500h3v3h-3zM14 3.500h3v3h-3zM3 9h3v3H3zM3 14.500h3v3H3zM18.500 9.500c0 5-3 8-9 8M15.500 11.500l3-3 2.500 3M12 14.500l-3.500 3 3.500 3" /></Svg>
      <Svg className="ml-[18px]" sw={1.200} color={dim}><path d="M4 3v15M1.800 15.500 4 18.300l2.200-2.800M10 3.500h3.500v3.500H10zM10 9h6v3.500h-6zM10 14.500h9V18h-9z" /></Svg>
      <Svg className="ml-[17px]" sw={1.200} color={dim}><path d="M4 3v15M1.800 15.500 4 18.300l2.200-2.800M10 3.500h9V7h-9zM10 9h6v3.500h-6zM10 14.500h3.500V18H10z" /></Svg>
      <Sep className="ml-[17px]" />
      <Svg className="ml-[15px]" sw={1.100}><path d="M12.200 3l3.300 1.500-5.300 11L7 17.500V14zM13.900 3.800 8.600 15" /><path d="M4 20.500h13" stroke="#444" strokeWidth="2" /></Svg>
      <Caret className="ml-[6px]" />
      <Svg className="ml-[10px]" sw={1.100} color={dim}><path d="M16 7.500l-4.500 9.500c-1.600 3-6.200 1-4.800-2.200L11.500 4.300c1-1.900 4-.8 3.200 1.400L10.500 15c-.7 1.300-2.500.6-2-.8L12.300 6" /></Svg>
      <Caret className="ml-[9px]" color={dim} />
      <Svg className="ml-[12px]" sw={1.100}><rect x="3" y="3" width="16" height="16" strokeDasharray="2.500 1.500" stroke="#777" /><path d="M7.500 9V6.500h7V9M11 6.500v9M9.500 15.500h3" /></Svg>
      <Svg className="ml-[15px]" sw={1.200}><path d="M10 3l7.500 3.500-2 1-1.500 5 1 3.500-9.500-4.500 3.500-1.500 2-4.500zM9.500 13.500 6 19" /></Svg>
      <div className="ml-[21px] flex h-7 w-[127px] items-center justify-end rounded-[2px] border border-[#cfcfcf] pr-[7px]"><Caret color="#c4c4c4" /></div>
      <Sep className="ml-[17px]" />
      <Svg className="ml-[15px]" sw={1.200}><path d="M1.500 3.500h4v3h-4zM1.500 9h4v3h-4zM1.500 14.500h4v3.500h-4zM7.500 3.500H20.500V18H7.500z" /><path d="M11 16v-3.500M14 16V7.500M17 16v-6" strokeWidth="2" /></Svg>
      <Caret className="ml-[6px]" />
      <Svg className="ml-[12px]" sw={1.300}><path d="M2.500 4.500h17M11 2.500v2M4 4.500v9.500h14V4.500M11 14v5M7.500 19h7" /><path d="M2.500 4h17" strokeWidth="1.800" /></Svg>
      <Sep className="ml-[18px]" />
      <Svg className="ml-[16px]" sw={1.400} color="#444"><circle cx="6" cy="11" r="2.900" /><circle cx="14.500" cy="5.500" r="2.600" /><circle cx="14.500" cy="16.500" r="2.600" /><path d="M8.600 9.500l3.800-2.600M8.600 12.500l3.800 2.600" /></Svg>
      <Svg className="ml-auto mr-[23px]" sw={1.200}><path d="M11 1.500v3M3 4.500h13l3.500 3.700L16 12H3zM11 12v8.500M8.500 20.500h5" /></Svg>
      <div className="flex w-[119px] items-center">
        <svg width="14" height="19" viewBox="0 0 14 19" className="mr-[6px]">
          <path d="M0 0h11v4H0z" fill="#84719a" /><path d="M0 5h14v4H0z" fill="#86a4cf" /><path d="M0 10h5v4H0z" fill="#f2a57c" /><path d="M0 15h8v4H0z" fill="#fb6f80" />
        </svg>
        <span className="whitespace-nowrap text-[16px] font-[350] tracking-[0.2px] text-[#1c1c1c]">Show Me</span>
      </div>
    </div>
  );
}

function DataPane() {
  return (
    <div className="flex w-[261px] shrink-0 flex-col border-r border-[#cdcdcd] bg-white">
      <div className="flex h-[33px] border-t border-[#d0d0d0]">
        <div className="flex w-[96px] items-center pb-px pl-[21px] text-[17px] font-semibold tracking-[-0.1px] text-black">Data</div>
        <div className="flex flex-1 items-center justify-between border-b border-l border-[#cdcdcd] bg-[#fafafa] pl-[15px] pr-[6px] text-[16px] font-[350] tracking-[0.4px] text-[#222]">
          Analytics
          <Svg size={10} color="#555" className="-mt-1"><path d="M7 .5 3 5l4 4.500" /></Svg>
        </div>
      </div>
      <div className="flex h-[37px] items-center border-b border-[#e2e2e2] pb-px pl-[25px] text-[14px] font-[350] text-[#3c3c3c]">
        <Svg size={15} color="#777" sw={1.100}>
          <ellipse cx="6" cy="3" rx="4.500" ry="2" /><path d="M1.500 3v8.500c0 1 1.500 1.800 3.500 2M10.500 3v4" /><circle cx="10.500" cy="11" r="3.500" fill="#2f7da1" stroke="none" /><path d="M9 11l1.200 1.200 2-2.400" stroke="#fff" />
        </Svg>
        <span className="ml-[5px] whitespace-nowrap tracking-[0.5px]">Sheet1 (Copy of Crime_d...</span>
      </div>
      <div className="flex items-center pl-[9px] pt-[9px]">
        <div className="flex h-[28px] w-[178px] items-center justify-between rounded-[2px] border border-[#c6c6c6] pb-px pl-[7px] pr-[6px] text-[14px] font-[350] tracking-[0.4px] text-[#999]">
          Search
          <Svg size={11} color="#666" sw={1.300}><circle cx="6.200" cy="4.600" r="3.600" /><path d="M3.800 7.200.8 10.500" /></Svg>
        </div>
        <Svg size={13} color="#666" className="ml-[4px]"><path d="M1 1h11L7.800 6.500v5.500l-2.500-1.500v-4z" /></Svg>
        <div className="ml-[6px] h-[22px] w-px bg-[#ccc]" />
        <Svg size={12} color="#666" sw={1.400} className="ml-[6px]"><path d="M0 1.500h12M0 4.500h12M0 7.500h12M0 10.500h12" strokeDasharray="3.500 .700" /></Svg>
        <Caret className="ml-[8px]" />
      </div>
      <div className="flex h-[36px] items-center pl-[21px] pt-[3px] text-[17px] font-semibold tracking-[-0.15px] text-black">Tables</div>
      {dimensions.map(([k, n]) => <Field key={n} kind={k} name={n} />)}
      <Field kind="num" name="Year" green />
      <Field kind="abc" name="Measure Names" italic />
      <div className="mb-px ml-[17px] h-px shrink-0 bg-[#dcdcdc]" />
      {measures.map(([k, n]) => <Field key={n} kind={k} name={n} green />)}
      <Field kind="num" name="Sheet1 (Count)" green italic />
      <Field kind="num" name="Measure Values" green italic />
    </div>
  );
}

function Cards() {
  const card = "border border-[#d0d0d0] bg-[#fafafa] pl-[7px] text-[14px] font-[350] tracking-[0.25px] text-[#333]";
  return (
    <div className="ml-1.5 flex w-[194px] shrink-0 flex-col gap-[6px]">
      <div className={`h-[70px] pt-[7px] ${card}`}>Pages</div>
      <div className={`h-[92px] pt-[7px] ${card}`}>Filters</div>
      <div className={`h-[295px] pt-[7px] ${card}`}>
        <div>Marks</div>
        <div className="mt-[14px] flex h-[24px] w-[178px] items-center rounded-[2px] border border-[#cdcdcd] pl-[11px]">
          <Svg size={14} color="#444" sw={1.200}><circle cx="7" cy="7" r="5.800" /></Svg>
          <span className="ml-[5px] flex-1 text-[13.500px] tracking-[-0.1px] text-[#444]">Automatic</span>
          <div className="flex h-full w-[22px] items-center justify-center border-l border-[#d8d8d8]"><Caret /></div>
        </div>
        <div className="mt-[7px] flex gap-[7px] tracking-normal">
          <MarkButton label="Color" className="w-[54px]"><ColorDots size={18} /></MarkButton>
          <MarkButton label="Size" className="w-[56px]">
            <Svg size={20} color="#555" sw={1.300}><path d="M4 7.500A7 7 0 1 1 12.500 16" /><circle cx="6" cy="13.500" r="4.300" /><path d="M4.500 12l3 3" /></Svg>
          </MarkButton>
          <MarkButton label="Label" className="w-[54px]">
            <Svg size={18} color="#555" sw={1.300}><rect x="1" y="1" width="16" height="16" rx="1" /><path d="M5.500 6.500v-2h7v2M9 4.500v9M7.300 13.500h3.400" /></Svg>
          </MarkButton>
        </div>
        <div className="mt-[7px] flex gap-[7px] tracking-normal">
          <MarkButton label="Detail" className="w-[54px]"><DetailIcon size={18} /></MarkButton>
          <MarkButton label="Tooltip" className="w-[56px]">
            <Svg size={20} color="#555" sw={1.300}><path d="M1.500 2h17v10.500h-10L5.500 16.500v-4h-4z" /></Svg>
          </MarkButton>
        </div>
        <div className="mt-[17px] flex items-center pl-[11px]"><ColorDots size={14} /><Pill className="ml-[6px] w-[142px] bg-[#4996b2] tracking-[0.6px]">Primary Type</Pill></div>
        <div className="mt-[3px] flex items-center pl-[10px]"><DetailIcon size={14} /><Pill className="ml-[7px] w-[142px] bg-[#4996b2] tracking-[0.6px]">ID</Pill></div>
      </div>
    </div>
  );
}

function Shelf({ label, pill, icon }: { label: string; pill: string; icon: React.ReactNode }) {
  return (
    <div className="flex h-[32px] shrink-0 items-center border border-[#d0d0d0] bg-[#fafafa]">
      <div className="flex h-full w-[159px] items-center border-r border-[#d0d0d0] pl-[6px] text-[14px] font-[350] tracking-[0.45px] text-[#333]">
        {icon}<span className="ml-[7px]">{label}</span>
      </div>
      <Pill className="ml-[2px] w-[178px] bg-[#00b180] tracking-[0.8px]">{pill}</Pill>
    </div>
  );
}

function Tab({ name, w, active, icon }: { name: string; w: string; active?: boolean; icon?: boolean }) {
  return (
    <div className={`flex h-full shrink-0 items-center whitespace-nowrap border-r border-[#c6c6c6] text-[14.500px] ${w} ${active ? "bg-[#fafafa] pb-px pl-[6px] font-semibold tracking-[0.15px] text-[#555]" : "pl-[7px] pt-px font-[350] tracking-[0.22px] text-[#4e4e4e]"}`}>
      {icon && <span className="ml-px mr-[4px] pb-[2px]"><Grid4 /></span>}
      {name}
    </div>
  );
}

export default function App() {
  const s71 = "w-[71px]", s125 = "w-[125px]", s80 = "w-[80px]";
  return (
    <div className={`flex h-[1021px] w-[1917px] flex-col overflow-hidden bg-[#f4f4f4] ${UI}`}>
      <div className={`flex h-[29px] shrink-0 items-center bg-[#f1f3f8] pl-[2px] text-[14px] text-[#1a1a1a] ${SEG}`}>
        <div className="flex h-[17px] w-[17px] items-center justify-center border border-[#d0d4da] bg-white">
          <Svg size={13} color="#3f8fb5" sw={1.300}><path d="M6.500 4v5M4 6.500h5M6.500 0v2.400M6.500 10.600V13M0 6.500h2.400M10.600 6.500H13M2.800 1.800v2.400M1.600 3H4M10.200 1.800v2.400M9 3h2.400M2.800 8.800v2.400M1.600 10H4M10.200 8.800v2.400M9 10h2.400" /></Svg>
        </div>
        <span className="ml-[8px] whitespace-nowrap tracking-[0.07px]">Tableau - Crime_Analysis_Project - Tableau license expires in 12 days</span>
        <div className="ml-auto flex items-center pr-[23px]">
          <Svg size={12} color="#111"><path d="M0 6h12" /></Svg>
          <Svg size={14} color="#111" className="ml-[45px]"><rect x="1.500" y="3.500" width="8.500" height="9" rx="1.500" /><path d="M4 1.200h6.500a2 2 0 0 1 2 2V11" /></Svg>
          <Svg size={14} color="#111" className="ml-[45px]"><path d="M1 1l12 12M13 1 1 13" /></Svg>
        </div>
      </div>
      <div className={`flex h-[25px] shrink-0 items-center bg-white pl-[7px] pt-[2px] text-[14px] tracking-[0.05px] text-[#111] ${SEG}`}>
        <span className="w-[39px]">File</span><span className="w-[48px]">Data</span><span className="w-[85px]">Worksheet</span>
        <span className="w-[89px]">Dashboard</span><span className="w-[50px]">Story</span><span className="w-[69px]">Analysis</span>
        <span className="w-[46px]">Map</span><span className="w-[63px]">Format</span><span className="w-[57px]">Server</span>
        <span className="w-[71px]">Window</span><span>Help</span>
      </div>
      <Toolbar />
      <div className="flex h-[852px] shrink-0">
        <DataPane />
        <Cards />
        <div className="ml-[6px] flex w-[1445px] shrink-0 flex-col">
          <Shelf label="Columns" pill="AVG(Longitude)" icon={<Svg size={14} color="#444" sw={1.800} className="-mt-[3px]"><path d="M3 4.500V13M7.500 4.500V13M12 4.500V13M3 1v2M7.500 1v2M12 1v2" /></Svg>} />
          <div className="h-[6px]" />
          <Shelf label="Rows" pill="AVG(Latitude)" icon={<Svg size={14} color="#444" sw={1.600} className="-mt-[2px]"><path d="M4.500 2.500H13M4.500 7H13M4.500 11.500H13M1 2.500h2M1 7h2M1 11.500h2" /></Svg>} />
          <div className="mt-[6px] flex items-start justify-between">
            <div className="relative h-[770px] w-[1246px] border border-[#d0d0d0] bg-white pl-[6px]">
              <div className="flex h-[51px] items-center pl-[5px] pt-[7px] text-[24px] font-light tracking-[0.400px] text-[#444]">Sheet 2</div>
              <div className="h-[711px] w-[1232px] border-r border-t border-[#e4e4e4]"><ScatterMap /></div>
              <div className="absolute bottom-[8px] left-[9px] h-[17px] bg-white/80 px-[3px] font-['Liberation_Sans'] text-[12.500px] leading-[17px] tracking-[0.270px] text-[#5a5a5a]">© 2024 Mapbox © OpenStreetMap</div>
              <div className="absolute bottom-[12px] right-[12px] flex h-[25px] w-[93px] items-center justify-center rounded-[3px] bg-gradient-to-r from-[#bebebe] to-[#a5a5a5] font-['Open_Sans'] text-[16px] font-bold text-white">&gt;1K nulls</div>
            </div>
            <div className="h-[731px] w-[193px] border border-[#d0d0d0] bg-white">
              <div className="flex h-[35px] items-center bg-[#fafafa] pl-[7px] text-[14px] font-[350] tracking-[0.500px] text-[#3a3a3a]">Primary Type</div>
              {legend.map(([n, c], i) => (
                <div key={i} className="flex h-[21px] items-center pl-[3px]">
                  <span className="h-[14px] w-[14px] shrink-0" style={{ background: c }} />
                  <span className="ml-[5px] whitespace-nowrap font-['Open_Sans'] text-[14px] font-[380] leading-none tracking-[0.820px] text-[#3c3c3c]">{n}</span>
                </div>
              ))}
            </div>
          </div>
        </div>
      </div>
      <div className="flex h-[38px] shrink-0 items-center border-y border-[#c9c9c9] bg-[#e6e6e6]">
        <div className="flex h-full w-[162px] shrink-0 items-center border-r border-[#c6c6c6] pl-[8px] pt-px text-[14.500px] font-[350] tracking-[0.220px] text-[#4e4e4e]">
          <Svg size={12} color="#555" className="mb-[2px] mr-[4px]"><path d="M2 2.500v7.500c0 .8 1.500 1.200 4 1.200s4-.4 4-1.200V2.500M2 2.500C2 1.500 3.500 1 6 1s4 .5 4 1.500S8.500 4 6 4 2 3.500 2 2.500" /></Svg>
          Data Source
        </div>
        <Tab name="Sheet 1" w="w-[72px]" />
        <Tab name="Sheet 2" w={s71} active />
        <Tab name="Dashboard 1" w={s125} icon />
        <Tab name="Sheet 3" w={s71} /><Tab name="Sheet 4" w={s71} /><Tab name="Sheet 5" w={s71} />
        <Tab name="Dashboard 2" w={s125} icon />
        <Tab name="Sheet 6" w={s71} /><Tab name="Sheet 7" w={s71} />
        <Tab name="Dashboard 3" w={s125} icon />
        <Tab name="Sheet 8" w={s71} /><Tab name="Sheet 9" w={s71} />
        <Tab name="Dashboard 4" w={s125} icon />
        <Tab name="Sheet 10" w={s80} /><Tab name="Sheet 11" w={s80} />
        <Tab name="Dashboard 5" w={s125} icon />
        {["M9 13H1.500V2H13v6M4.500 10V8M7 10V5M9.500 9V7", "M8 13H2V2h11v6M7.500 2v11M2 7.500h9", "M7.500 13V4L2 2v9.500L7.500 13M7.500 4 13 2v6"].map((d) => (
          <div key={d} className="flex h-full w-[32px] items-center justify-center border-r border-[#c6c6c6]">
            <Svg size={17} color="#555"><path d={d} /><path d="M12.500 9v7M9 12.500h7" stroke="#444" strokeWidth="2" /></Svg>
          </div>
        ))}
      </div>
      <div className="flex h-[26px] shrink-0 items-center border-b border-[#aab4be] bg-[#ebebeb] text-[13px] font-[350] tracking-[0.330px] text-[#1c1c1c]">
        <span className="w-[112px] pl-[3px]">246571 marks</span>
        <span className="w-[129px] pl-[3px]">1 row by 1 column</span>
        <span className="pl-[3px]">SUM of AVG(Longitude): -21,616,927.6457</span>
        <div className="ml-auto flex h-full">
          <div className="w-[157px] border-l border-[#cfcfcf]" />
          <div className="w-[32px] border-l border-[#cfcfcf]" />
          <div className="w-[32px] border-l border-[#cfcfcf]" />
          <div className="w-[57px] border-l border-[#cfcfcf]" />
          <div className="flex w-[71px] items-center border-l border-[#cfcfcf] pb-px pl-[7px]">
            <svg width="56" height="8" viewBox="0 0 56 8" fill="#b2b2b2"><path d="M1 0h1.500v8H1zM7.500 0v8L3 4zM22 0v8l-4.500-4zM34 0v8l4.500-4zM49 0v8l4.500-4zM54 0h1.500v8H54z" /></svg>
          </div>
          <div className="flex w-[68px] items-center border-l border-[#cfcfcf] pb-px pl-[8px]">
            <svg width="55" height="11" viewBox="0 0 55 11" fill="#b0b0b0">
              <path d="M0 0h3v3H0zM4 0h3v3H4zM8 0h3v3H8zM0 4h3v3H0zM4 4h3v3H4zM8 4h3v3H8zM0 8h3v3H0zM4 8h3v3H4zM8 8h3v3H8zM22 0h11v6H22zM22 8h3v3h-3zM26 8h3v3h-3zM30 8h3v3h-3z" />
              <path d="M44 0h10v11H44z" fill="#666" />
            </svg>
          </div>
        </div>
      </div>
    </div>
  );
}
